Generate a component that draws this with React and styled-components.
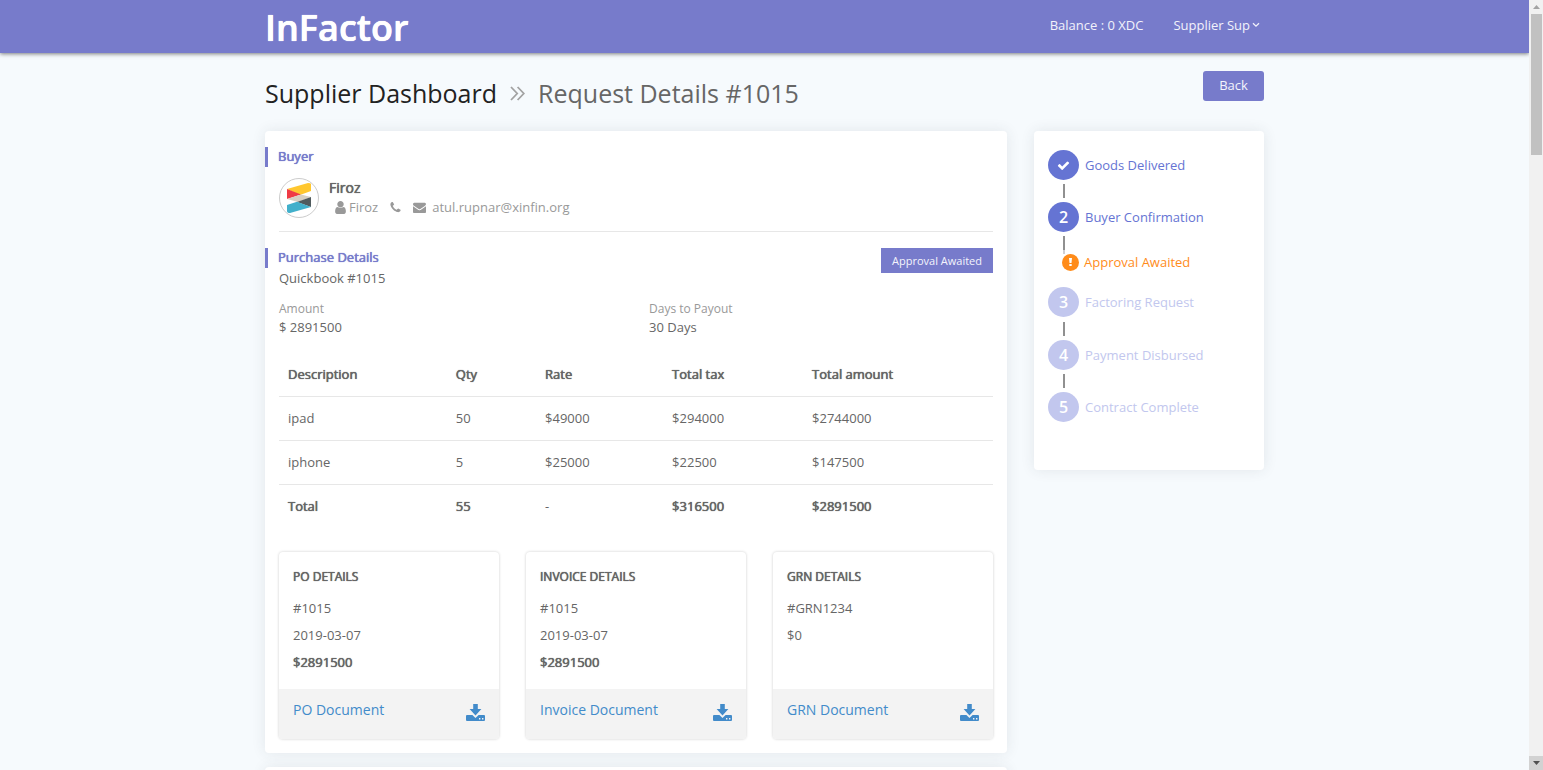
import React from "react";
import styled, { createGlobalStyle, css } from "styled-components";

const c = {
  brand: "#777bcb",
  step: "#6574d3",
  stepOff: "#c2c7ee",
  warn: "#ff8c1a",
  text: "#666666",
  muted: "#999999",
  link: "#428bca",
  line: "#e7e7e7",
};

const Global = createGlobalStyle`
  *, *::before, *::after { box-sizing: border-box; }
  body {
    margin: 0;
    background: #f6fafd;
    color: ${c.text};
    font: 13px/20px "Open Sans", "Liberation Sans", sans-serif;
  }
  h1, h2, h3, p, ul, ol, dl, dd { margin: 0; padding: 0; }
  a { text-decoration: none; }
  svg { display: block; flex: none; fill: currentColor; }
`;

const strong = css`
  font-weight: 400;
  text-shadow: 0 0 0 currentColor, 0 0 1px currentColor;
`;

const Shell = styled.div`
  display: grid;
  grid-template-columns: minmax(0, 1fr) 14px;
  height: 100vh;
`;
const Viewport = styled.div`
  overflow: hidden;
`;
const Container = styled.div`
  width: 100%;
  max-width: 999px;
  margin: 0 auto;
`;

const Header = styled.header`
  background: ${c.brand};
  box-shadow: 0 1px 4px rgba(0, 0, 0, 0.5);
`;
const HeaderRow = styled(Container)`
  display: flex;
  justify-content: space-between;
  height: 53px;
`;
const Logo = styled.a`
  color: #fff;
  font-size: 36px;
  font-weight: 600;
  line-height: 56px;
  text-shadow: 0 0 0 currentColor, 0 0 1px currentColor;
`;
const Nav = styled.nav`
  display: flex;
  gap: 30px;
  padding: 15px 4px 0 0;
  color: #f2f2fb;
`;
const UserMenu = styled.button`
  display: flex;
  align-items: center;
  gap: 2px;
  height: 20px;
  padding: 0;
  border: 0;
  background: none;
  color: inherit;
  font: inherit;
`;

const TitleRow = styled(Container)`
  display: flex;
  justify-content: space-between;
  align-items: flex-start;
  padding: 18px 0 23px;
`;
const Crumbs = styled.h1`
  display: flex;
  align-items: center;
  gap: 13px;
  padding-top: 7px;
  font-size: 25px;
  font-weight: 400;
  line-height: 30px;
  color: #666;
  a { color: #222; }
  svg { color: #a2a2a2; }
`;
const BackButton = styled.button`
  width: 61px;
  height: 30px;
  padding: 0 0 2px;
  border: 0;
  border-radius: 3px;
  background: ${c.brand};
  color: #f4f4fc;
  font: inherit;
`;

const Columns = styled(Container)`
  display: grid;
  grid-template-columns: minmax(0, 1fr) 230px;
  gap: 14px 27px;
  align-items: start;
`;
const Panel = styled.section`
  background: #fff;
  border-radius: 4px;
  box-shadow: 0 0 14px rgba(50, 60, 70, 0.1);
`;
const Details = styled(Panel)`
  padding: 16px 14px 14px;
`;
const NextPanel = styled(Panel)`
  height: 200px;
`;

const Heading = styled.h2`
  ${strong}
  height: 20px;
  margin-left: -14px;
  padding-left: 10px;
  border-left: 3px solid ${c.brand};
  color: ${c.brand};
  font-size: 13px;
  line-height: 18px;
`;
const Buyer = styled.div`
  display: flex;
  gap: 10px;
  padding: 11px 0 13px;
  margin-bottom: 16px;
  border-bottom: 1px solid ${c.line};
`;
const Avatar = styled.div`
  display: grid;
  place-items: center;
  width: 40px;
  height: 40px;
  border: 1px solid #ccc;
  border-radius: 50%;
`;
const BuyerName = styled.h3`
  ${strong}
  font-size: 14px;
  line-height: 19px;
`;
const Contacts = styled.ul`
  display: flex;
  gap: 11px;
  padding-left: 4px;
  list-style: none;
  color: ${c.muted};
`;
const Contact = styled.li`
  display: flex;
  align-items: center;
  gap: ${(p) => p.$gap}px;
`;

const SplitRow = styled.div`
  display: flex;
  justify-content: space-between;
  align-items: flex-start;
  height: 20px;
`;
const Badge = styled.span`
  padding: 0 11px;
  background: ${c.brand};
  color: #f4f4fc;
  font-size: 11px;
  line-height: 25px;
`;
const Facts = styled.dl`
  display: grid;
  grid-template-columns: 370px 1fr;
  padding: 11px 0 15px;
  dt { color: ${c.muted}; font-size: 12px; line-height: 19px; }
  dd { line-height: 19px; }
`;

const Items = styled.table`
  width: 100%;
  table-layout: fixed;
  border-collapse: collapse;
  margin-bottom: 24px;
  tbody tr { border-top: 1px solid ${c.line}; }
  th, td {
    height: 44px;
    padding: 0 0 0 9px;
    text-align: left;
    font-weight: 400;
  }
  th { ${strong} }
`;
const Cell = styled.td`
  ${(p) => p.$strong && strong}
`;
const Col = styled.col`
  width: ${(p) => p.$w}%;
`;

const Docs = styled.div`
  display: grid;
  grid-template-columns: repeat(3, 1fr);
  gap: 27px;
`;
const Doc = styled.article`
  display: flex;
  flex-direction: column;
  border-radius: 4px;
  overflow: hidden;
  box-shadow: 0 0 3px rgba(0, 0, 0, 0.2);
`;
const DocBody = styled.div`
  flex: 1;
  padding: 15px 14px 13px;
  p { line-height: 27px; }
`;
const DocTitle = styled.h3`
  ${strong}
  padding-bottom: 8px;
  font-size: 12px;
  line-height: 20px;
`;
const Amount = styled.p`
  ${strong}
`;
const DocLink = styled.a`
  display: flex;
  justify-content: space-between;
  height: 50px;
  padding: 11px 14px;
  background: #f3f3f3;
  color: ${c.link};
  font-size: 14px;
  svg { margin-top: 4px; }
`;

const Progress = styled(Panel).attrs({ as: "aside" })`
  padding: 19px 14px 48px;
`;
const Steps = styled.ol`
  list-style: none;
`;
const Step = styled.li`
  display: flex;
  align-items: center;
  gap: 6px;
  height: 30px;
  color: ${(p) => (p.$off ? c.stepOff : c.step)};
`;
const Dot = styled.span`
  display: grid;
  place-items: center;
  width: 31px;
  height: 30px;
  border-radius: 50%;
  background: ${(p) => (p.$off ? c.stepOff : c.step)};
  color: #fff;
  font-size: 16px;
  font-weight: 600;
`;
const Link = styled.li`
  width: 2px;
  height: ${(p) => (p.$tail ? 18 : 14)}px;
  margin: 4px 0 ${(p) => (p.$tail ? 0 : 4)}px 15px;
  background: linear-gradient(#909090 14px, #cfcfd4 14px);
`;
const Notice = styled.li`
  display: flex;
  align-items: center;
  gap: 5px;
  height: 20px;
  margin: -2px 0 15px 14px;
  color: ${c.warn};
`;
const NoticeDot = styled.span`
  display: grid;
  place-items: center;
  width: 17px;
  height: 17px;
  border-radius: 50%;
  background: ${c.warn};
  color: #fff;
`;
const LaterLink = styled(Link)`
  margin-top: 5px;
`;

const ScrollTrack = styled.div`
  display: grid;
  grid-template-rows: 14px minmax(0, 1fr) 14px;
  background: #f1f1f1;
`;
const ScrollEnd = styled.span`
  display: grid;
  place-items: center;
  background: ${(p) => (p.$active ? "#d2d2d2" : "transparent")};
  color: ${(p) => (p.$active ? "#505050" : "#a3a3a3")};
`;
const Thumb = styled.span`
  height: 19%;
  margin: 0 1px 0 2px;
  background: #c1c1c1;
`;

const FaPath = ({ d, w, h = w }) => (
  <svg width={w} height={h} viewBox="0 0 1792 1792" aria-hidden="true"><path d={d} /></svg>
);
const userPath = "M1536 1399q0 109-62.5 187t-150.5 78h-854q-88 0-150.5-78t-62.5-187q0-85 8.5-160.5t31.5-152 58.5-131 94-89 134.5-34.5q131 128 313 128t313-128q76 0 134.5 34.5t94 89 58.5 131 31.5 152 8.5 160.5zm-256-887q0 159-112.5 271.5t-271.5 112.5-271.5-112.5-112.5-271.5 112.5-271.5 271.5-112.5 271.5 112.5 112.5 271.5z";
const phonePath = "M1600 1240q0 27-10 70.5t-21 68.5q-21 50-122 106-94 51-186 51-27 0-52.5-3.5t-57.5-12.5-47.5-14.5-55.5-20.5-49-18q-98-35-175-83-128-79-264.5-215.5t-215.5-264.5q-48-77-83-175-3-9-18-49t-20.5-55.5-14.5-47.5-12.5-57.5-3.5-52.5q0-92 51-186 56-101 106-122 25-11 68.5-21t70.5-10q14 0 21 3 18 6 53 76 11 19 30 54t35 63.5 31 53.5q3 4 17.5 25t21.5 35.5 7 28.5q0 20-28.5 50t-62 55-62 53-28.5 46q0 9 5 22.5t8.5 20.5 14 24 11.5 19q76 137 174 235t235 174q2 1 19 11.5t24 14 20.5 8.5 22.5 5q18 0 46-28.5t53-62 55-62 50-28.5q14 0 28.5 7t35.5 21.5 25 17.5q25 15 53.5 31t63.5 35 54 30q70 35 76 53 3 7 3 21z";
const mailPath = "M1792 710v794q0 66-47 113t-113 47h-1472q-66 0-113-47t-47-113v-794q44 49 101 87 362 246 497 345 57 42 92.5 65.5t94.5 48 110 24.5h2q51 0 110-24.5t94.5-48 92.5-65.5q170-123 498-345 57-39 100-87zm0-294q0 79-49 151t-122 123q-376 261-468 325-10 7-42.5 31t-54 38.5-52 32.5-57.5 27-50 9h-2q-23 0-50-9t-57.5-27-52-32.5-54-38.5-42.5-31q-91-64-262-182.5t-205-142.5q-62-42-117-115.5t-55-136.5q0-78 41.5-130t118.5-52h1472q65 0 112.5 47t47.5 113z";
const checkPath = "M1671 566q0 40-28 68l-724 724-136 136q-28 28-68 28t-68-28l-136-136-362-362q-28-28-28-68t28-68l136-136q28-28 68-28t68 28l294 295 656-657q28-28 68-28t68 28l136 136q28 28 28 68z";

const ChevronDown = () => (
  <svg width="8" height="6" viewBox="0 0 8 6" aria-hidden="true">
    <path d="M1 1.2 4 4.2 7 1.2" fill="none" stroke="currentColor" strokeWidth="1.3" />
  </svg>
);
const DoubleChevron = () => (
  <svg width="15" height="15" viewBox="0 0 15 15" aria-hidden="true">
    <path d="M1 1 7.2 7.5 1 14M7.6 1l6.2 6.5L7.6 14" fill="none" stroke="currentColor" strokeWidth="1.8" />
  </svg>
);
const Download = () => (
  <svg width="19" height="17" viewBox="0 0 19 17" aria-hidden="true">
    <path d="M7.2 0h4.6v5H15.4L9.5 11.4 3.6 5h3.6z" />
    <path fillRule="evenodd" d="M1 11h5.4l3.1 3 3.1-3H18q1 0 1 1v4q0 1-1 1H1q-1 0-1-1v-4q0-1 1-1zM13 14v1.4h1.4V14zM16 14v1.4h1.4V14z" />
  </svg>
);
const BuyerLogo = () => (
  <svg width="24" height="30" viewBox="0 0 24 30" aria-hidden="true">
    <path fill="#ffc72f" d="M0 6 21 0q3 0 3 1v7L13 12z" />
    <path fill="#ef3a45" d="M0 6 14 11.5 0 16z" />
    <path fill="#d7cfc2" d="M0 16 14 11.5 24 14 11 19z" />
    <path fill="#505a5d" d="M24 14v10L10 19z" />
    <path fill="#42b0cb" d="M10 18.8 24 24 3 30q-3 0-3-2v-6z" />
  </svg>
);
const Arrow = ({ down }) => (
  <svg width="7" height="4" viewBox="0 0 7 4" aria-hidden="true">
    <path d={down ? "M0 0h7L3.5 4z" : "M0 4h7L3.5 0z"} />
  </svg>
);

const rows = [
  ["ipad", "50", "$49000", "$294000", "$2744000"],
  ["iphone", "5", "$25000", "$22500", "$147500"],
  ["Total", "55", "-", "$316500", "$2891500"],
];
const docs = [
  { title: "PO DETAILS", lines: ["#1015", "2019-03-07"], amount: "$2891500", link: "PO Document" },
  { title: "INVOICE DETAILS", lines: ["#1015", "2019-03-07"], amount: "$2891500", link: "Invoice Document" },
  { title: "GRN DETAILS", lines: ["#GRN1234", "$0"], link: "GRN Document" },
];

export default function App() {
  return (
    <Shell>
      <Global />
      <Viewport>
        <Header>
          <HeaderRow>
            <Logo href="#">InFactor</Logo>
            <Nav>
              <span>Balance : 0 XDC</span>
              <UserMenu type="button">Supplier Sup <ChevronDown /></UserMenu>
            </Nav>
          </HeaderRow>
        </Header>
        <TitleRow>
          <Crumbs>
            <a href="#">Supplier Dashboard</a>
            <DoubleChevron />
            <span>Request Details #1015</span>
          </Crumbs>
          <BackButton type="button">Back</BackButton>
        </TitleRow>
        <Columns as="main">
          <Details>
            <Heading>Buyer</Heading>
            <Buyer>
              <Avatar><BuyerLogo /></Avatar>
              <div>
                <BuyerName>Firoz</BuyerName>
                <Contacts>
                  <Contact $gap={1}><FaPath d={userPath} w={15} />Firoz</Contact>
                  <Contact $gap={1}><FaPath d={phonePath} w={13} /></Contact>
                  <Contact $gap={6}><FaPath d={mailPath} w={13} />atul.rupnar@xinfin.org</Contact>
                </Contacts>
              </div>
            </Buyer>
            <SplitRow>
              <Heading>Purchase Details</Heading>
              <Badge>Approval Awaited</Badge>
            </SplitRow>
            <p>Quickbook #1015</p>
            <Facts>
              <div><dt>Amount</dt><dd>$ 2891500</dd></div>
              <div><dt>Days to Payout</dt><dd>30 Days</dd></div>
            </Facts>
            <Items>
              <colgroup>
                <Col $w={23.5} /><Col $w={12.5} /><Col $w={17.8} /><Col $w={19.6} /><Col $w={26.6} />
              </colgroup>
              <thead>
                <tr>
                  {["Description", "Qty", "Rate", "Total tax", "Total amount"].map((h) => (
                    <th key={h} scope="col">{h}</th>
                  ))}
                </tr>
              </thead>
              <tbody>
                {rows.map((r) => (
                  <tr key={r[0]}>
                    {r.map((v, i) => (
                      <Cell key={i} $strong={r[0] === "Total" && v !== "-"}>{v}</Cell>
                    ))}
                  </tr>
                ))}
              </tbody>
            </Items>
            <Docs>
              {docs.map((d) => (
                <Doc key={d.title}>
                  <DocBody>
                    <DocTitle>{d.title}</DocTitle>
                    {d.lines.map((l) => <p key={l}>{l}</p>)}
                    {d.amount && <Amount>{d.amount}</Amount>}
                  </DocBody>
                  <DocLink href="#">{d.link}<Download /></DocLink>
                </Doc>
              ))}
            </Docs>
          </Details>
          <Progress>
            <Steps>
              <Step><Dot><FaPath d={checkPath} w={13} /></Dot>Goods Delivered</Step>
              <Link />
              <Step><Dot>2</Dot>Buyer Confirmation</Step>
              <Link $tail />
              <Notice>
                <NoticeDot>
                  <svg width="3" height="8" viewBox="0 0 3 8" aria-hidden="true">
                    <path d="M0 0h3L2.5 5h-2zM.3 6h2.4v2H.3z" />
                  </svg>
                </NoticeDot>
                Approval Awaited
              </Notice>
              <Step $off><Dot $off>3</Dot>Factoring Request</Step>
              <LaterLink />
              <Step $off><Dot $off>4</Dot>Payment Disbursed</Step>
              <Link />
              <Step $off><Dot $off>5</Dot>Contract Complete</Step>
            </Steps>
          </Progress>
          <NextPanel />
        </Columns>
      </Viewport>
      <ScrollTrack aria-hidden="true">
        <ScrollEnd><Arrow /></ScrollEnd>
        <Thumb />
        <ScrollEnd $active><Arrow down /></ScrollEnd>
      </ScrollTrack>
    </Shell>
  );
}
